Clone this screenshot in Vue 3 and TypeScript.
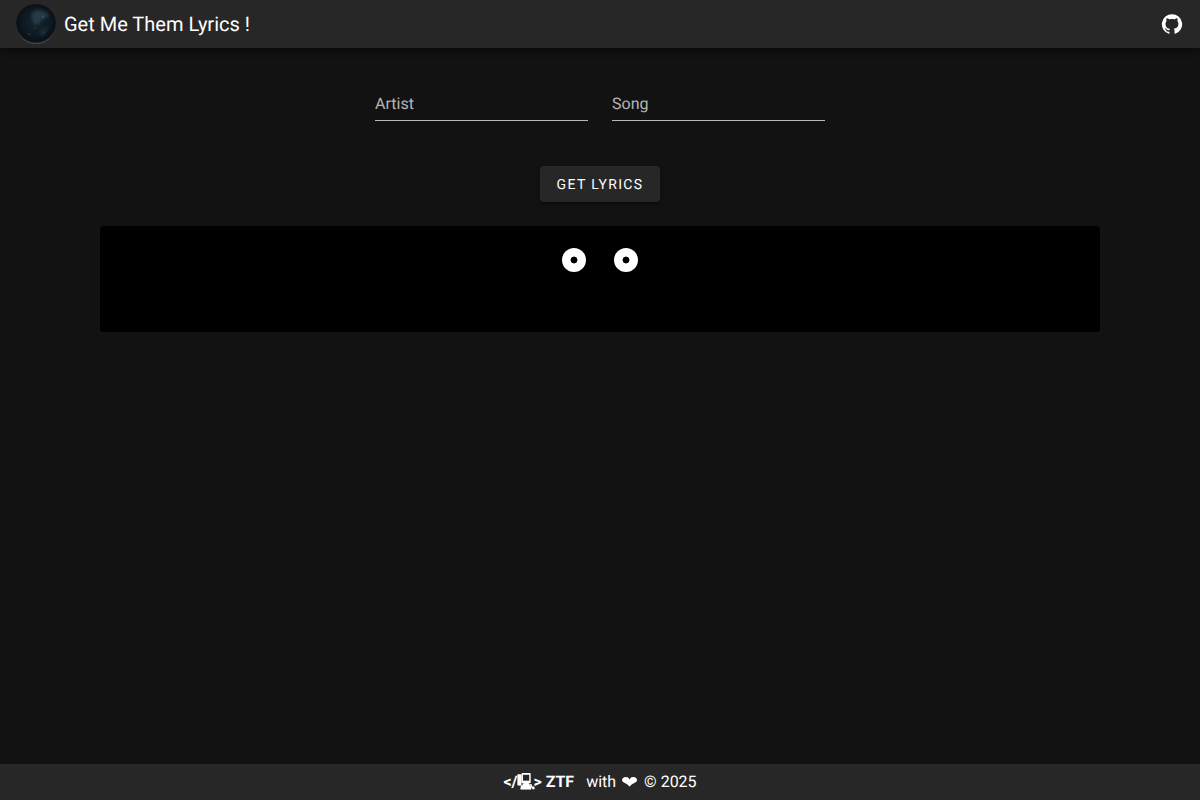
<script setup lang="ts">
import { ref } from "vue";
const artist = ref<string>("");
const song = ref<string>("");
</script>

<template>
  <div class="page">
    <header class="bar">
      <div class="brand">
        <svg class="avatar" viewBox="0 0 40 40" aria-hidden="true">
          <defs>
            <radialGradient id="globe" cx="50%" cy="46%" r="54%">
              <stop offset="0%" stop-color="#16252f" />
              <stop offset="60%" stop-color="#0e1a22" />
              <stop offset="90%" stop-color="#0a1016" />
              <stop offset="100%" stop-color="#4a545b" />
            </radialGradient>
            <filter id="soft"><feGaussianBlur stdDeviation="1.6" /></filter>
          </defs>
          <circle cx="20" cy="20" r="20" fill="url(#globe)" />
          <g filter="url(#soft)">
            <path d="M18 7c6-2 12 0 15 5-3 3-8 2-9 6-1 3-5 3-7 0-1-4-2-8 1-11z" fill="#2f4654" opacity=".7" />
            <path d="M23 27c3-2 7-3 9-5 0 4-3 9-7 10-2-1-3-3-2-5z" fill="#1c3140" opacity=".7" />
          </g>
          <circle cx="27" cy="13" r=".5" fill="#9db3bf" />
          <circle cx="13" cy="30" r=".5" fill="#7d97a6" />
          <circle cx="19" cy="24" r=".4" fill="#7d97a6" />
          <circle cx="28" cy="29" r=".4" fill="#7d97a6" />
        </svg>
        <h1 class="title">Get Me Them Lyrics !</h1>
      </div>
      <a class="gh" aria-label="GitHub">
        <svg viewBox="0 0 24 24" width="22" height="22" fill="#fff" aria-hidden="true">
          <path d="M12 1.27a11 11 0 0 0-3.48 21.46c.55.09.73-.28.73-.55v-1.84c-3.03.64-3.67-1.46-3.67-1.46-.55-1.29-1.28-1.65-1.28-1.65-.92-.65.1-.65.1-.65 1.1 0 1.73 1.1 1.73 1.1.92 1.65 2.57 1.2 3.21.92a2.16 2.16 0 0 1 .64-1.47c-2.47-.27-5.04-1.19-5.04-5.5 0-1.1.46-2.1 1.2-2.84a3.76 3.76 0 0 1 0-2.93s.91-.28 3.11 1.1c1.8-.49 3.7-.49 5.5 0 2.1-1.38 3.02-1.1 3.02-1.1a3.76 3.76 0 0 1 0 2.93c.83.74 1.2 1.74 1.2 2.94 0 4.21-2.57 5.13-5.04 5.4.45.37.82.92.82 2.02v3.03c0 .27.1.64.73.55A11 11 0 0 0 12 1.27" />
        </svg>
      </a>
    </header>

    <main class="content">
      <form class="fields" @submit.prevent>
        <input v-model="artist" class="field" placeholder="Artist" />
        <input v-model="song" class="field" placeholder="Song" />
      </form>
      <button class="action" type="button">Get Lyrics</button>
      <section class="panel">
        <div class="eyes">
          <span class="eye"></span>
          <span class="eye"></span>
        </div>
      </section>
    </main>

    <footer class="foot">
      <strong class="mark">&lt;/<span class="pc">🖳</span>&gt; ZTF</strong>
      <span class="with">with</span>
      <span class="heart">❤</span>
      <span class="copy">© 2025</span>
    </footer>
  </div>
</template>

<style>
html,
body {
  margin: 0;
  background: #121212;
}
</style>

<style scoped>
.page {
  min-height: 800px;
  display: flex;
  flex-direction: column;
  background: #121212;
  color: #fff;
  font-family: Roboto, "Liberation Sans", sans-serif;
  text-rendering: geometricPrecision;
}
.bar {
  height: 48px;
  box-sizing: border-box;
  padding: 0 16px;
  display: flex;
  align-items: center;
  justify-content: space-between;
  background: #272727;
  box-shadow: 0 2px 4px -1px rgba(0, 0, 0, 0.2), 0 4px 5px rgba(0, 0, 0, 0.14), 0 1px 10px rgba(0, 0, 0, 0.12);
}
.brand {
  display: flex;
  align-items: center;
  gap: 8px;
}
.avatar {
  width: 40px;
  height: 40px;
  display: block;
}
.title {
  margin: 0;
  font-size: 20px;
  font-weight: 400;
  line-height: 1.6;
}
.gh {
  display: block;
  width: 22px;
  height: 22px;
  margin-right: 1px;
}
.content {
  flex: 1;
  display: flex;
  flex-direction: column;
  align-items: center;
  padding: 40px 100px 0;
}
.fields {
  display: flex;
  gap: 24px;
  margin: 0;
}
.field {
  width: 213px;
  height: 33px;
  box-sizing: border-box;
  padding: 4px 0 5px;
  border: 0;
  border-bottom: 1px solid rgba(255, 255, 255, 0.7);
  border-radius: 0;
  background: transparent;
  outline: none;
  color: #fff;
  font: 400 16px/1.4375 Roboto, sans-serif;
  text-rendering: geometricPrecision;
}
.field::placeholder {
  color: rgba(255, 255, 255, 0.7);
  opacity: 1;
}
.action {
  margin-top: 45px;
  width: 120px;
  height: 36px;
  padding: 2px 0 0;
  border: 0;
  border-radius: 4px;
  background: #272727;
  color: #fff;
  font: 400 14px/1.75 Roboto, sans-serif;
  letter-spacing: 1.35px;
  text-transform: uppercase;
  text-rendering: geometricPrecision;
  box-shadow: 0 3px 1px -2px rgba(0, 0, 0, 0.2), 0 2px 2px rgba(0, 0, 0, 0.14), 0 1px 5px rgba(0, 0, 0, 0.12);
}
.panel {
  margin-top: 24px;
  width: 1000px;
  height: 106px;
  box-sizing: border-box;
  padding-top: 22px;
  background: #000;
  border-radius: 4px;
}
.eyes {
  display: flex;
  justify-content: center;
  gap: 28px;
}
.eye {
  width: 24px;
  height: 24px;
  border-radius: 50%;
  background: radial-gradient(circle, #000 0 3.2px, #fff 3.7px);
}
.foot {
  height: 36px;
  box-sizing: border-box;
  display: flex;
  align-items: center;
  justify-content: center;
  background: #272727;
  font-size: 16px;
  line-height: 24px;
}
.mark {
  font-weight: 700;
}
.pc {
  display: inline-block;
  width: 16px;
  line-height: 1;
  transform: scaleX(0.85);
  transform-origin: left center;
}
.with {
  margin-left: 12px;
}
.heart {
  display: block;
  margin: 2px 0 0 5px;
  width: 15px;
  font-size: 17px;
  transform: scaleX(1.2);
  transform-origin: left center;
}
.copy {
  margin-left: 8px;
}
</style>
